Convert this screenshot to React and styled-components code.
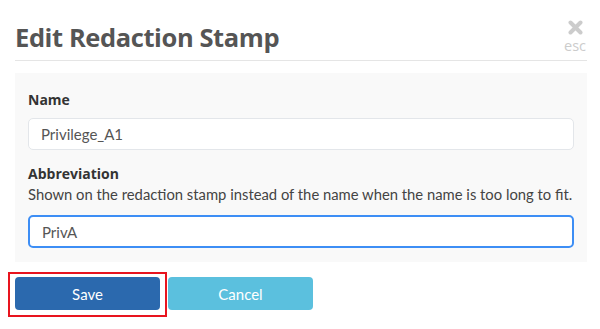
import React from "react";
import styled, { createGlobalStyle } from "styled-components";

const Global = createGlobalStyle`
  html, body { margin: 0; padding: 0; background: #fff; }
  body { font-family: "Lato", "Open Sans", sans-serif; color: #333; }
  * { box-sizing: border-box; }
`;

const Page = styled.div`
  width: 600px;
  height: 329px;
  padding: 0 13px 0 15px;
`;

const Header = styled.div`
  display: flex;
  align-items: flex-start;
  justify-content: space-between;
  height: 61px;
  border-bottom: 1px solid #e5e5e5;
`;

const Title = styled.h1`
  margin: 20px 0 0 0;
  font-family: "Open Sans", "Noto Sans", sans-serif;
  font-size: 25.5px;
  font-weight: 700;
  color: #555;
  line-height: 34px;
  letter-spacing: -0.4px;
`;

const Close = styled.div`
  display: flex;
  flex-direction: column;
  align-items: center;
  margin: 20px 1px 0 0;
  color: #ccc;
`;

const Esc = styled.span`
  font-family: "Open Sans", sans-serif;
  font-size: 14.5px;
  line-height: 15px;
  margin-top: 3px;
`;

const Panel = styled.div`
  margin-top: 12px;
  background: #f9f9f9;
  padding: 17px 13px 14px 13px;
`;

const Label = styled.label`
  display: block;
  margin-top: ${(p) => p.$mt || "0"};
  font-family: "Open Sans", sans-serif;
  font-size: 14px;
  font-weight: 700;
  color: #333;
  line-height: 20px;
`;

const Help = styled.div`
  font-size: 14.8px;
  color: #444;
  line-height: 20px;
  white-space: nowrap;
`;

const Input = styled.input`
  display: block;
  width: 100%;
  height: ${(p) => (p.$focus ? "33px" : "32px")};
  margin-top: ${(p) => p.$mt};
  padding: 0 12px;
  font-family: "Lato", sans-serif;
  font-size: 15px;
  color: #555;
  background: #fff;
  border: ${(p) => (p.$focus ? "2px solid #3d8ef5" : "1px solid #e3e6ea")};
  border-radius: 5px;
  outline: none;
`;

const Actions = styled.div`
  display: flex;
  align-items: flex-start;
  gap: 1px;
  margin: 10px 0 0 -7px;
`;

const Highlight = styled.div`
  border: 2px solid #e8141e;
  padding: 3px 5px 5px 5px;
`;

const Button = styled.button`
  width: 145px;
  height: 33px;
  border: none;
  border-radius: 4px;
  font-family: "Lato", sans-serif;
  font-size: 15px;
  color: #fff;
  background: ${(p) => p.$bg};
  margin-top: ${(p) => p.$mt || "0"};
`;

function XIcon() {
  return (
    <svg width="15" height="15" viewBox="0 0 15 15">
      <path d="M2.5 2.5 L12.5 12.5 M12.5 2.5 L2.5 12.5" stroke="#cccccc" strokeWidth="4" strokeLinecap="round" />
    </svg>
  );
}

export default function App() {
  return (
    <>
      <Global />
      <Page>
        <Header>
          <Title>Edit Redaction Stamp</Title>
          <Close>
            <XIcon />
            <Esc>esc</Esc>
          </Close>
        </Header>
        <Panel>
          <Label>Name</Label>
          <Input $mt="8px" defaultValue="Privilege_A1" />
          <Label $mt="14px">Abbreviation</Label>
          <Help>Shown on the redaction stamp instead of the name when the name is too long to fit.</Help>
          <Input $focus $mt="11px" defaultValue="PrivA" />
        </Panel>
        <Actions>
          <Highlight>
            <Button $bg="#2b69ae">Save</Button>
          </Highlight>
          <Button $bg="#5bc0de" $mt="5px">Cancel</Button>
        </Actions>
      </Page>
    </>
  );
}
